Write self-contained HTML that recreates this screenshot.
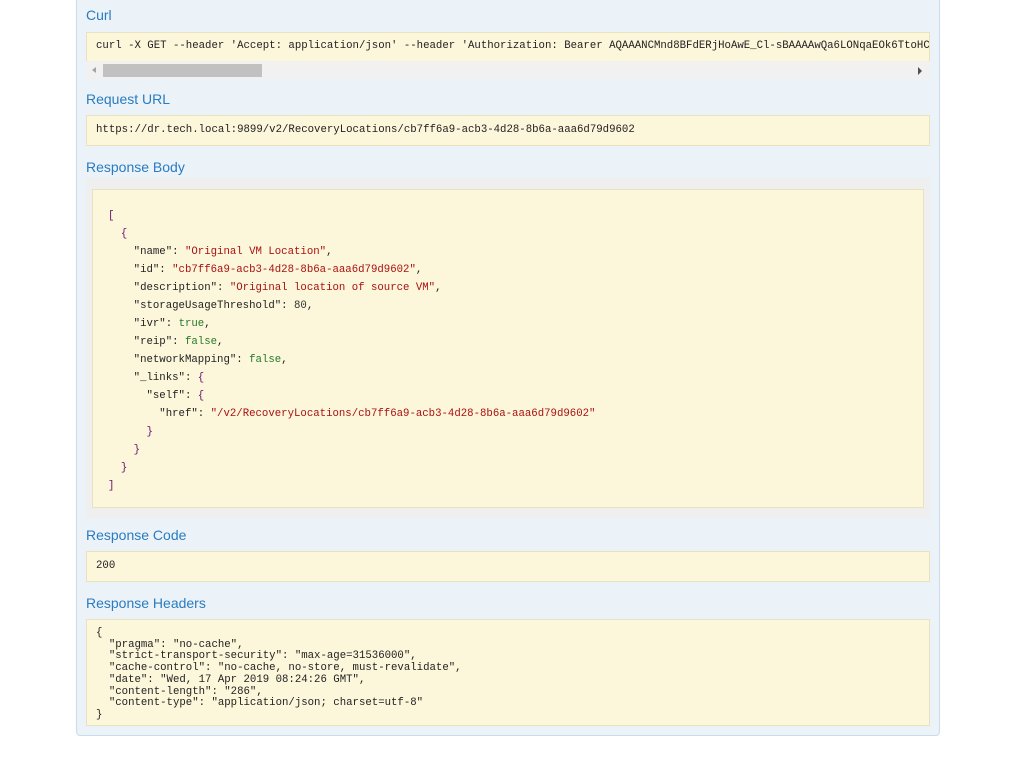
<!DOCTYPE html>
<html><head><meta charset="utf-8"><style>
*{margin:0;padding:0;box-sizing:border-box}
body{width:1011px;height:760px;background:#fff;position:relative;overflow:hidden;font-family:"Liberation Sans",sans-serif}
.panel{position:absolute;left:76px;top:-6px;width:864px;height:742px;background:#ebf3f9;border:1px solid #c9dcec;border-radius:4px}
h4{position:absolute;left:86px;font-size:14px;font-weight:normal;color:#2a7bc0;line-height:16px}
.box{position:absolute;left:86px;width:844px;background:#fcf6db;border:1px solid #e8e2c0;font-family:"Liberation Mono",monospace;font-size:10.7px;color:#222;white-space:pre;overflow:hidden}
.k{color:#222}.s{color:#a11}.b{color:#26782a}.p{color:#6a0f6a}.n{color:#333}
</style></head><body>
<div class="panel"></div>
<h4 style="top:7px">Curl</h4>
<div class="box" style="top:32px;height:29px;padding:7px 0 0 9px;border-bottom:none">curl -X GET --header 'Accept: application/json' --header 'Authorization: Bearer AQAAANCMnd8BFdERjHoAwE_Cl-sBAAAAwQa6LONqaEOk6TtoHC</div>
<div style="position:absolute;left:86px;top:61px;width:844px;height:18px;background:#f1f1f1"></div>
<div style="position:absolute;left:92px;top:67px;width:0;height:0;border-top:3px solid transparent;border-bottom:3px solid transparent;border-right:4px solid #a3a3a3"></div>
<div style="position:absolute;left:103px;top:64px;width:159px;height:13px;background:#c1c1c1"></div>
<div style="position:absolute;left:918px;top:67px;width:0;height:0;border-top:4px solid transparent;border-bottom:4px solid transparent;border-left:4px solid #505050"></div>
<h4 style="top:91px">Request URL</h4>
<div class="box" style="top:115px;height:31px;padding:8px 0 0 9px">https://dr.tech.local:9899/v2/RecoveryLocations/cb7ff6a9-acb3-4d28-8b6a-aaa6d79d9602</div>
<h4 style="top:159px">Response Body</h4>
<div style="position:absolute;left:86px;top:178px;width:844px;height:340px;background:#efefef"></div>
<div class="box" style="left:92px;top:189px;width:832px;height:319px;padding:17px 0 0 15px;line-height:18px"><span class="p">[</span>
  <span class="p">{</span>
    "name": <span class="s">"Original VM Location"</span>,
    "id": <span class="s">"cb7ff6a9-acb3-4d28-8b6a-aaa6d79d9602"</span>,
    "description": <span class="s">"Original location of source VM"</span>,
    "storageUsageThreshold": <span class="n">80</span>,
    "ivr": <span class="b">true</span>,
    "reip": <span class="b">false</span>,
    "networkMapping": <span class="b">false</span>,
    "_links": <span class="p">{</span>
      "self": <span class="p">{</span>
        "href": <span class="s">"/v2/RecoveryLocations/cb7ff6a9-acb3-4d28-8b6a-aaa6d79d9602"</span>
      <span class="p">}</span>
    <span class="p">}</span>
  <span class="p">}</span>
<span class="p">]</span></div>
<h4 style="top:527px">Response Code</h4>
<div class="box" style="top:551px;height:31px;padding:8px 0 0 9px">200</div>
<h4 style="top:595px">Response Headers</h4>
<div class="box" style="top:619px;height:107px;padding:8px 0 0 9px;line-height:11.7px">{
  "pragma": "no-cache",
  "strict-transport-security": "max-age=31536000",
  "cache-control": "no-cache, no-store, must-revalidate",
  "date": "Wed, 17 Apr 2019 08:24:26 GMT",
  "content-length": "286",
  "content-type": "application/json; charset=utf-8"
}</div>
</body></html>
